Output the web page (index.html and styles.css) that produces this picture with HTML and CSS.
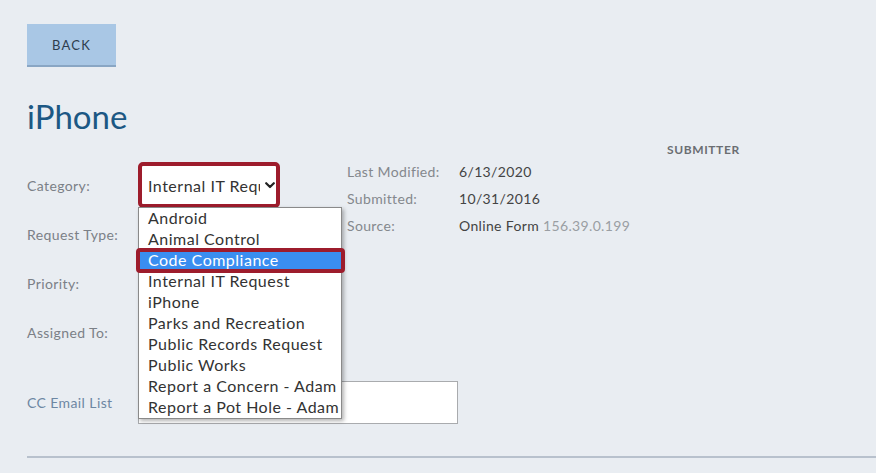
FILE: index.html
```html
<!DOCTYPE html>
<html lang="en">
<head>
<meta charset="utf-8">
<title>iPhone</title>
<link rel="stylesheet" href="styles.css">
</head>
<body>
<div class="page">
  <button class="back">BACK</button>
  <h1 class="title">iPhone</h1>
  <div class="main">
    <div class="form">
      <div class="row">
        <div class="label">Category:</div>
        <div class="field">
          <div class="select-hl">
            <div class="select">
              <span class="select-text">Internal IT Request</span>
              <svg class="chev" width="10" height="7" viewBox="0 0 10 7"><path d="M1.2 1.2 L5 5 L8.8 1.2" fill="none" stroke="#222" stroke-width="2.2" stroke-linecap="round" stroke-linejoin="round"/></svg>
            </div>
          </div>
          <ul class="dropdown">
            <li>Android</li>
            <li>Animal Control</li>
            <li class="active">Code Compliance</li>
            <li>Internal IT Request</li>
            <li>iPhone</li>
            <li>Parks and Recreation</li>
            <li>Public Records Request</li>
            <li>Public Works</li>
            <li>Report a Concern - Adam</li>
            <li>Report a Pot Hole - Adam</li>
          </ul>
        </div>
      </div>
      <div class="row"><div class="label">Request Type:</div><div class="field"></div></div>
      <div class="row"><div class="label">Priority:</div><div class="field"></div></div>
      <div class="row"><div class="label">Assigned To:</div><div class="field"></div></div>
      <div class="row row-cc"><div class="label label-cc">CC Email List</div><div class="field"><div class="cc-input"></div></div></div>
    </div>
    <div class="side">
      <div class="side-head"><span class="submitter">SUBMITTER</span></div>
      <div class="info">
        <div class="info-row"><span class="info-label">Last Modified:</span><span class="info-value">6/13/2020</span></div>
        <div class="info-row"><span class="info-label">Submitted:</span><span class="info-value">10/31/2016</span></div>
        <div class="info-row"><span class="info-label">Source:</span><span class="info-value">Online Form <span class="ip">156.39.0.199</span></span></div>
      </div>
    </div>
  </div>
  <div class="rule"></div>
</div>
</body>
</html>
```

FILE: styles.css
```css
* { box-sizing: border-box; }
html, body { margin: 0; padding: 0; }
body {
  background: #e9edf2;
  font-family: Lato, "Open Sans", sans-serif;
  color: #444;
  width: 876px;
  height: 473px;
  overflow: hidden;
}
.page { padding: 24px 0 0 27px; }
.back {
  display: block;
  width: 89px;
  height: 43px;
  margin: 0;
  padding: 0;
  border: 0;
  border-bottom: 2px solid #89a6c4;
  background: #a9c7e5;
  color: #2e3d4e;
  font-family: inherit;
  font-size: 13px;
  letter-spacing: 1.2px;
}
.title {
  margin: 29px 0 0;
  font-size: 33px;
  line-height: 40px;
  font-weight: 400;
  color: #1c5884;
}
.main {
  display: flex;
  margin-top: 5px;
}
.form {
  width: 320px;
  flex: none;
  padding-top: 21px;
  display: flex;
  flex-direction: column;
  gap: 3px;
}
.row {
  display: flex;
  align-items: center;
  height: 46px;
}
.row-cc { margin-top: 23px; height: 43px; }
.label {
  width: 111px;
  flex: none;
  font-size: 14px;
  letter-spacing: 0.4px;
  color: #7b8087;
}
.label-cc { color: #6d87a3; }
.field { position: relative; width: 209px; height: 100%; }
.select-hl {
  width: 142px;
  height: 46px;
  border: 4px solid #9d1c2c;
  border-radius: 5px;
  background: #fff;
}
.select {
  display: flex;
  align-items: center;
  height: 100%;
  padding-left: 6px;
  font-size: 16px;
  letter-spacing: 0.5px;
  color: #333;
}
.select-text {
  width: 112px;
  overflow: hidden;
  white-space: nowrap;
  flex: none;
}
.chev { margin-left: 5px; flex: none; }
.dropdown {
  position: absolute;
  left: 0;
  top: 45px;
  width: 204px;
  margin: 0;
  padding: 0;
  list-style: none;
  background: #fff;
  border: 1px solid #8a8a8a;
  box-shadow: 2px 2px 4px rgba(0, 0, 0, 0.3);
  z-index: 5;
}
.dropdown li {
  position: relative;
  height: 21px;
  line-height: 19px;
  padding-left: 9px;
  font-size: 16px;
  letter-spacing: 0.5px;
  color: #333;
  white-space: nowrap;
}
.dropdown li.active {
  background: #3a8ef0;
  color: #fff;
}
.dropdown li.active::after {
  content: "";
  position: absolute;
  left: -3px;
  right: -4px;
  top: -2px;
  bottom: -2px;
  border: 4px solid #9d1c2c;
  border-radius: 4px;
}
.cc-input {
  width: 320px;
  height: 43px;
  background: #fff;
  border: 1px solid #a9abae;
}
.side { flex: 1; }
.side-head {
  height: 17px;
  padding-left: 320px;
  display: flex;
  align-items: center;
}
.submitter {
  font-size: 12px;
  font-weight: 700;
  color: #6b6e72;
  letter-spacing: 0.6px;
}
.info-row {
  display: flex;
  align-items: center;
  height: 27px;
  font-size: 14px;
  letter-spacing: 0.35px;
}
.info-label { width: 112px; flex: none; color: #84888d; }
.info-value { color: #444; }
.ip { color: #9a9ea3; }
.rule {
  margin-top: 32px;
  height: 2px;
  background: #b8c1cd;
}
```
